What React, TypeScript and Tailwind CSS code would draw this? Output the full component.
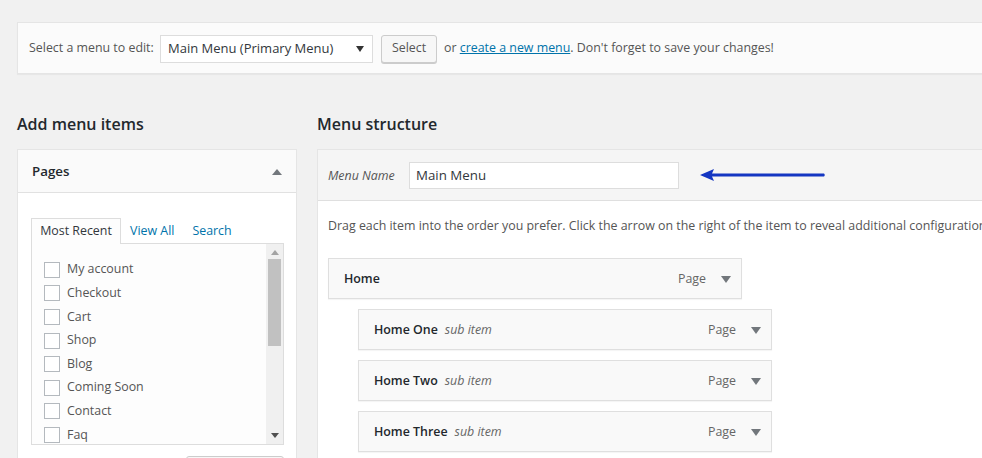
import React from 'react';

const pages = ['My account', 'Checkout', 'Cart', 'Shop', 'Blog', 'Coming Soon', 'Contact', 'Faq'];

const subItems = ['Home One', 'Home Two', 'Home Three'];

// small down triangle used on menu items
const Caret = () => (
  <svg width="10" height="7" viewBox="0 0 10 7" className="block">
    <path d="M0 0h10L5 7z" fill="#72777c" />
  </svg>
);

const MenuItem: React.FC<{ title: string; sub?: boolean }> = ({ title, sub }) => (
  <div className="w-[414px] h-[41px] flex items-center pl-[15px] pr-[10px] pt-[1px] bg-[#f9f9f9] border border-[#dfdfdf] shadow-[0_1px_1px_rgba(0,0,0,0.04)]">
    <span className="font-semibold text-[#23282d]">{title}</span>
    {sub && <span className="italic text-[#666] ml-[7px]">sub item</span>}
    <span className="ml-auto text-[#666]">Page</span>
    <span className="ml-[15px]">
      <Caret />
    </span>
  </div>
);

export default function App() {
  return (
    <div className="w-[982px] h-[458px] overflow-hidden bg-[#f1f1f1] text-[12.4px] text-[#444] font-['Open_Sans',sans-serif]">
      <div className="w-[1100px] pl-[17px]">
        {/* Menu selector bar */}
        <div className="mt-[22px] h-[52px] flex items-center px-[11px] pt-[1px] bg-[#fbfbfb] border border-[#e5e5e5] shadow-[0_1px_1px_rgba(0,0,0,0.04)]">
          <span className="w-[124px] text-[#555] whitespace-nowrap">Select a menu to edit:</span>
          <div className="ml-[7px] w-[213px] h-[28px] flex items-center pl-[7px] pr-[8px] bg-white border border-[#ddd] text-[13px] text-[#32373c]">
            <span>Main Menu (Primary Menu)</span>
            <svg width="8" height="6" viewBox="0 0 8 6" className="ml-auto">
              <path d="M0 0h8L4 6z" fill="#333" />
            </svg>
          </div>
          <button className="ml-[8px] w-[56px] h-[28px] bg-[#f7f7f7] border border-[#ccc] rounded-[3px] text-[#555] shadow-[0_1px_0_#ccc]">
            Select
          </button>
          <span className="ml-[7px] text-[#555]">
            or <a className="text-[#0073aa] underline">create a new menu</a>. Don't forget to save your changes!
          </span>
        </div>

        <div className="flex">
          {/* Left column */}
          <div className="w-[280px] shrink-0">
            <h2 className="mt-[39px] h-[23px] leading-[23px] text-[16px] font-semibold text-[#23282d]">Add menu items</h2>
            <div className="mt-[13px] bg-white border border-[#e5e5e5] h-[400px]">
              <div className="h-[43px] flex items-center pl-[14px] pr-[14px] pt-[2px] bg-[#fafafa] border-b border-[#e1e1e1]">
                <span className="font-semibold text-[13.3px] text-[#23282d]">Pages</span>
                <svg width="10" height="6" viewBox="0 0 10 6" className="ml-auto">
                  <path d="M0 6h10L5 0z" fill="#72777c" />
                </svg>
              </div>
              <div className="pt-[24px] pl-[13px]">
                <div className="flex items-end h-[26px]">
                  <div className="h-[26px] w-[90px] flex items-center justify-center bg-[#fdfdfd] border border-b-0 border-[#ddd] text-[#32373c] relative top-[1px]">
                    Most Recent
                  </div>
                  <span className="ml-[9px] h-[25px] leading-[25px] text-[#0073aa]">View All</span>
                  <span className="ml-[18px] h-[25px] leading-[25px] text-[#0073aa]">Search</span>
                </div>
                <div className="w-[253px] h-[202px] flex bg-[#fdfdfd] border border-[#ddd] overflow-hidden">
                  <div className="flex-1 pt-[14px] pl-[12px]">
                    {pages.map((p) => (
                      <div key={p} className="h-[23.6px] flex items-center">
                        <span className="w-[16px] h-[16px] bg-white border border-[#b4b9be] shrink-0" />
                        <span className="ml-[7px] text-[#555]">{p}</span>
                      </div>
                    ))}
                  </div>
                  <div className="w-[17px] bg-[#f0f0f0] flex flex-col items-center">
                    <svg width="8" height="5" viewBox="0 0 8 5" className="mt-[6px]">
                      <path d="M0 5h8L4 0z" fill="#a3a3a3" />
                    </svg>
                    <div className="mt-[4px] w-[13px] h-[87px] bg-[#c1c1c1]" />
                    <svg width="8" height="5" viewBox="0 0 8 5" className="mt-auto mb-[6px]">
                      <path d="M0 0h8L4 5z" fill="#505050" />
                    </svg>
                  </div>
                </div>
                <div className="ml-[155px] mt-[11px] w-[98px] h-[28px] bg-[#f7f7f7] border border-[#ccc] rounded-[3px]" />
              </div>
            </div>
          </div>

          {/* Right column */}
          <div className="ml-[20px] flex-1">
            <h2 className="mt-[39px] h-[23px] leading-[23px] text-[16px] font-semibold text-[#23282d]">Menu structure</h2>
            <div className="mt-[13px] bg-white border border-[#e5e5e5] h-[400px]">
              <div className="h-[51px] flex items-center pl-[10px] bg-[#f5f5f5] border-b border-[#dfdfdf]">
                <span className="w-[81px] pt-[2px] italic text-[#555]">Menu Name</span>
                <div className="w-[270px] h-[27px] flex items-center pl-[6px] pt-[1px] bg-white border border-[#ddd] text-[13.3px] text-[#32373c]">
                  Main Menu
                </div>
                <svg width="130" height="14" viewBox="0 0 130 14" className="ml-[21px]">
                  <path d="M0 7 L14 1 L12 5.6 L124 5.6 Q125.5 7 124 8.4 L12 8.4 L14 13 Z" fill="#1436c2" />
                </svg>
              </div>
              <div className="pl-[10px]">
                <p className="mt-[16px] h-[18px] leading-[18px] text-[#555] whitespace-nowrap">
                  Drag each item into the order you prefer. Click the arrow on the right of the item to reveal additional configuration options.
                </p>
                <div className="mt-[23px] flex flex-col gap-[10px]">
                  <MenuItem title="Home" />
                  {subItems.map((s) => (
                    <div key={s} className="ml-[30px]">
                      <MenuItem title={s} sub />
                    </div>
                  ))}
                </div>
              </div>
            </div>
          </div>
        </div>
      </div>
    </div>
  );
}
